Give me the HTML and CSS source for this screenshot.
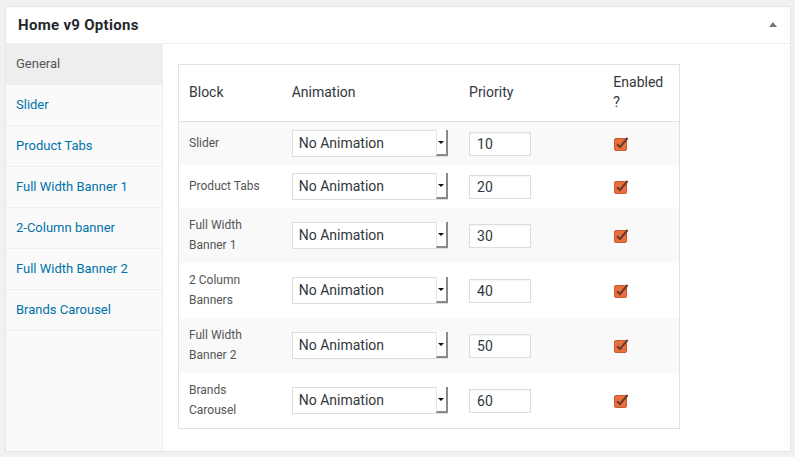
FILE: index.html
```html
<!DOCTYPE html>
<html>
<head>
<meta charset="utf-8">
<link rel="stylesheet" href="styles.css">
</head>
<body>
<div class="panel">
  <div class="panel-head">
    <h2 class="panel-title">Home v9 Options</h2>
    <span class="toggle"></span>
  </div>
  <div class="panel-body">
    <ul class="tabs">
      <li class="tab active">General</li>
      <li class="tab">Slider</li>
      <li class="tab">Product Tabs</li>
      <li class="tab">Full Width Banner 1</li>
      <li class="tab">2-Column banner</li>
      <li class="tab">Full Width Banner 2</li>
      <li class="tab">Brands Carousel</li>
    </ul>
    <div class="content">
      <table class="blocks">
        <thead>
          <tr>
            <th class="c1">Block</th>
            <th class="c2">Animation</th>
            <th class="c3">Priority</th>
            <th class="c4">Enabled ?</th>
          </tr>
        </thead>
        <tbody>
          <tr class="alt one">
            <td>Slider</td>
            <td><div class="sel"><span>No Animation</span><i class="btn"></i></div></td>
            <td><input class="num" type="text" value="10"></td>
            <td><svg class="chk" width="16" height="16" viewBox="0 0 16 16"><rect x="1.5" y="2.5" width="12" height="12" rx="1.5" fill="#e8703f" stroke="#c95a2c"/><path d="M4 8.2 L7 11 L14.6 2" fill="none" stroke="#6b3a2a" stroke-width="2"/></svg></td>
          </tr>
          <tr class="one">
            <td>Product Tabs</td>
            <td><div class="sel"><span>No Animation</span><i class="btn"></i></div></td>
            <td><input class="num" type="text" value="20"></td>
            <td><svg class="chk" width="16" height="16" viewBox="0 0 16 16"><rect x="1.5" y="2.5" width="12" height="12" rx="1.5" fill="#e8703f" stroke="#c95a2c"/><path d="M4 8.2 L7 11 L14.6 2" fill="none" stroke="#6b3a2a" stroke-width="2"/></svg></td>
          </tr>
          <tr class="alt">
            <td>Full Width<br>Banner 1</td>
            <td><div class="sel"><span>No Animation</span><i class="btn"></i></div></td>
            <td><input class="num" type="text" value="30"></td>
            <td><svg class="chk" width="16" height="16" viewBox="0 0 16 16"><rect x="1.5" y="2.5" width="12" height="12" rx="1.5" fill="#e8703f" stroke="#c95a2c"/><path d="M4 8.2 L7 11 L14.6 2" fill="none" stroke="#6b3a2a" stroke-width="2"/></svg></td>
          </tr>
          <tr>
            <td>2 Column<br>Banners</td>
            <td><div class="sel"><span>No Animation</span><i class="btn"></i></div></td>
            <td><input class="num" type="text" value="40"></td>
            <td><svg class="chk" width="16" height="16" viewBox="0 0 16 16"><rect x="1.5" y="2.5" width="12" height="12" rx="1.5" fill="#e8703f" stroke="#c95a2c"/><path d="M4 8.2 L7 11 L14.6 2" fill="none" stroke="#6b3a2a" stroke-width="2"/></svg></td>
          </tr>
          <tr class="alt">
            <td>Full Width<br>Banner 2</td>
            <td><div class="sel"><span>No Animation</span><i class="btn"></i></div></td>
            <td><input class="num" type="text" value="50"></td>
            <td><svg class="chk" width="16" height="16" viewBox="0 0 16 16"><rect x="1.5" y="2.5" width="12" height="12" rx="1.5" fill="#e8703f" stroke="#c95a2c"/><path d="M4 8.2 L7 11 L14.6 2" fill="none" stroke="#6b3a2a" stroke-width="2"/></svg></td>
          </tr>
          <tr>
            <td>Brands<br>Carousel</td>
            <td><div class="sel"><span>No Animation</span><i class="btn"></i></div></td>
            <td><input class="num" type="text" value="60"></td>
            <td><svg class="chk" width="16" height="16" viewBox="0 0 16 16"><rect x="1.5" y="2.5" width="12" height="12" rx="1.5" fill="#e8703f" stroke="#c95a2c"/><path d="M4 8.2 L7 11 L14.6 2" fill="none" stroke="#6b3a2a" stroke-width="2"/></svg></td>
          </tr>
        </tbody>
      </table>
    </div>
  </div>
</div>
</body>
</html>
```
FILE: styles.css
```css
* { box-sizing: border-box; }
html, body { margin: 0; padding: 0; }
body {
  background: #f1f1f1;
  font-family: Roboto, "Liberation Sans", sans-serif;
  color: #32373c;
  padding: 6px 5px 0 5px;
}
.panel {
  width: 786px;
  height: 446px;
  background: #fff;
  border: 1px solid #e5e5e5;
  display: flex;
  flex-direction: column;
}
.panel-head {
  flex: 0 0 37px;
  height: 37px;
  border-bottom: 1px solid #eee;
  display: flex;
  align-items: center;
  justify-content: space-between;
  padding: 0 12px 0 12px;
}
.panel-title {
  margin: 0;
  font-size: 15px;
  font-weight: 700;
  color: #23282d;
  letter-spacing: 0.3px;
}
.toggle {
  width: 0; height: 0;
  border-left: 4px solid transparent;
  border-right: 4px solid transparent;
  border-bottom: 5px solid #72777c;
  margin-right: 1px;
  margin-top: -1px;
}
.panel-body {
  flex: 1;
  display: flex;
  min-height: 0;
}
.tabs {
  list-style: none;
  margin: 0;
  padding: 0;
  width: 157px;
  background: #fafafa;
  border-right: 1px solid #eee;
}
.tab {
  height: 41px;
  border-bottom: 1px solid #eee;
  padding: 0 10px 2px 10px;
  display: flex;
  align-items: center;
  font-size: 13px;
  color: #0073aa;
}
.tab.active {
  background: #eee;
  color: #555;
  border-bottom-color: #eee;
}
.content {
  flex: 1;
  padding: 20px 15px 0 15px;
}
.blocks {
  border-collapse: collapse;
  border: 1px solid #e1e1e1;
  width: 502px;
  table-layout: fixed;
}
.blocks th {
  text-align: left;
  font-weight: 400;
  font-size: 14px;
  line-height: 20px;
  color: #32373c;
  padding: 7px 10px 9px 10px;
  border-bottom: 1px solid #e1e1e1;
  height: 56px;
}
.c1 { width: 103px; }
.c2 { width: 177px; }
.c3 { width: 144px; }
.c4 { width: 76px; }
.blocks td {
  font-size: 12px;
  line-height: 19.5px;
  height: 55px;
  color: #555;
  padding: 8px 10px;
  vertical-align: middle;
}
.blocks tr.one td { height: 43px; }
.blocks tr.alt td { background: #f9f9f9; }
.sel {
  width: 156px;
  height: 27px;
  background: #fff;
  border: 1px solid #ddd;
  display: flex;
  align-items: center;
  justify-content: space-between;
  padding-left: 6px;
  font-size: 14px;
  color: #32373c;
}
.btn {
  width: 12px;
  height: 26px;
  margin-top: -1px;
  margin-right: -1px;
  background: #fff;
  border-left: 1px solid #e6e6e6;
  border-right: 2px solid #8a8a8a;
  border-bottom: 2px solid #8a8a8a;
  position: relative;
}
.btn::after {
  content: "";
  position: absolute;
  left: 1px;
  top: 11px;
  border-left: 3.5px solid transparent;
  border-right: 3.5px solid transparent;
  border-top: 3.5px solid #111;
}
.num {
  width: 62px;
  height: 24px;
  border: 1px solid #ddd;
  box-shadow: inset 0 1px 2px rgba(0,0,0,0.05);
  font-family: Roboto, "Liberation Sans", sans-serif;
  font-size: 14px;
  color: #32373c;
  padding: 0 7px;
  margin: 0;
  display: block;
}
.chk { display: block; }
```
